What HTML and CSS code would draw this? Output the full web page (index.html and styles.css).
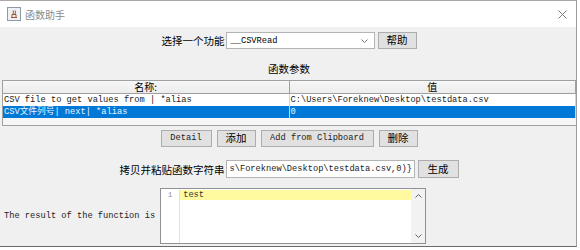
FILE: index.html
```html
<!DOCTYPE html>
<html lang="zh">
<head>
  <meta charset="UTF-8">
  <title>函数助手</title>
  <link rel="stylesheet" href="styles.css">
</head>
<body>
  <div class="window">
    <div class="titlebar">
      <svg class="app-icon" width="14" height="14" viewBox="0 0 14 14">
        <rect x="0.5" y="0.5" width="13" height="13" fill="#eef2f6" stroke="#8e9aa8"/>
        <path d="M4 10.5 h6 M5 10 v-2.5 h4 v2.5 M6 7 q1 -2 0 -3.5 M8 7 q1 -2 0 -3.5" fill="none" stroke="#a0522d" stroke-width="1"/>
      </svg>
      <span class="title">函数助手</span>
      <svg class="close" width="9" height="9" viewBox="0 0 9 9">
        <path d="M0.5 0.5 L8.5 8.5 M8.5 0.5 L0.5 8.5" stroke="#7a7a7a" stroke-width="1"/>
      </svg>
    </div>

    <div class="content">
      <div class="row selector">
        <label class="label">选择一个功能</label>
        <div class="combo">
          <span class="mono">__CSVRead</span>
          <svg class="combo-arrow" width="7" height="4" viewBox="0 0 7 4">
            <path d="M0.5 0.5 L3.5 3.5 L6.5 0.5" fill="none" stroke="#777" stroke-width="1"/>
          </svg>
        </div>
        <button class="btn btn-help">帮助</button>
      </div>

      <div class="section-title">函数参数</div>

      <div class="table-pane">
        <table class="params">
          <colgroup>
            <col class="col-name">
            <col>
          </colgroup>
          <thead>
            <tr><th>名称:</th><th>值</th></tr>
          </thead>
          <tbody>
            <tr>
              <td>CSV file to get values from | *alias</td>
              <td>C:\Users\Foreknew\Desktop\testdata.csv</td>
            </tr>
            <tr class="selected">
              <td>CSV文件列号| next| *alias</td>
              <td>0</td>
            </tr>
          </tbody>
        </table>
      </div>

      <div class="row actions">
        <button class="btn mono btn-detail">Detail</button>
        <button class="btn btn-small">添加</button>
        <button class="btn mono btn-clip">Add from Clipboard</button>
        <button class="btn btn-small">删除</button>
      </div>

      <div class="row copy">
        <label class="label">拷贝并粘贴函数字符串</label>
        <div class="field mono">s\Foreknew\Desktop\testdata.csv,0)}</div>
        <button class="btn btn-gen">生成</button>
      </div>

      <div class="result">
        <span class="mono result-label">The result of the function is</span>
        <div class="editor">
          <div class="gutter">1</div>
          <div class="lines">
            <div class="line current mono">test</div>
          </div>
          <div class="scrollbar">
            <svg width="7" height="4" viewBox="0 0 7 4">
              <path d="M0.5 3.5 L3.5 0.5 L6.5 3.5" fill="none" stroke="#666" stroke-width="1"/>
            </svg>
            <svg width="7" height="4" viewBox="0 0 7 4">
              <path d="M0.5 0.5 L3.5 3.5 L6.5 0.5" fill="none" stroke="#666" stroke-width="1"/>
            </svg>
          </div>
        </div>
      </div>
    </div>
  </div>
</body>
</html>
```

FILE: styles.css
```css
body {
  margin: 0;
  background-color: #fff;
  font-family: "Noto Sans CJK SC", sans-serif;
  font-size: 10.5px;
  color: #000;
}

.mono {
  font-family: "Liberation Mono", "Noto Sans CJK SC", monospace;
  font-size: 8.7px;
}

.window {
  width: 576px;
  height: 246px;
  border-right: 1px solid #9c9c9c;
  border-bottom: 1px solid #6a6a6a;
  display: flex;
  flex-direction: column;
}

.titlebar {
  height: 26px;
  border-top: 1px solid #a8a8a8;
  background-color: #fff;
  display: flex;
  align-items: center;
  padding: 0 9px 0 7px;
}

.title {
  margin-left: 4px;
  color: #8a8a8a;
  font-size: 10px;
}

.close {
  margin-left: auto;
}

.content {
  flex: 1;
  background-color: #f0f0f0;
  padding: 5px 0 0 2px;
  display: flex;
  flex-direction: column;
}

.row {
  display: flex;
  justify-content: center;
  align-items: center;
}

.label {
  white-space: nowrap;
}

.btn {
  box-sizing: border-box;
  height: 17px;
  padding: 0;
  background-color: #e1e1e1;
  border: 1px solid #adadad;
  border-radius: 0;
  font-family: "Noto Sans CJK SC", sans-serif;
  font-size: 10.5px;
  color: #000;
  line-height: 1;
}

.btn.mono {
  font-family: "Liberation Mono", monospace;
  font-size: 8.7px;
  color: #222;
}

/* selector row */
.selector {
  height: 17px;
}

.combo {
  box-sizing: border-box;
  width: 149px;
  height: 17px;
  margin-left: 1px;
  padding: 0 6px 0 4px;
  background-color: #fff;
  border: 1px solid #b4b4b4;
  display: flex;
  align-items: center;
  justify-content: space-between;
}

.btn-help {
  width: 39px;
  margin-left: 3px;
}

.section-title {
  margin-top: 13px;
  height: 14px;
  line-height: 14px;
  text-align: center;
}

/* parameter table */
.table-pane {
  box-sizing: border-box;
  height: 46px;
  margin-top: 4px;
  border: 1px solid #a0a0a0;
  border-right: none;
  background-color: #f6f6f6;
}

.params {
  width: 100%;
  border-collapse: collapse;
  table-layout: fixed;
}

.col-name {
  width: 286px;
}

.params th {
  height: 12px;
  padding: 0;
  font-weight: normal;
  font-size: 10px;
  line-height: 12px;
  background: linear-gradient(#f7f7f7, #ececec);
  border-bottom: 1px solid #a0a0a0;
  border-right: 1px solid #a0a0a0;
}

.params td {
  height: 12px;
  padding: 0 0 0 1px;
  font-family: "Liberation Mono", "Noto Sans CJK SC", monospace;
  font-size: 8.7px;
  line-height: 12px;
  white-space: nowrap;
  overflow: hidden;
  background-color: #fff;
  color: #222;
  border-right: 1px solid #d4d4d4;
}

.params tr.selected td {
  background-color: #0078d7;
  color: #eaf6ff;
}

/* buttons */
.actions {
  margin-top: 4px;
  height: 17px;
  gap: 5px;
}

.btn-detail {
  width: 51px;
}

.btn-small {
  width: 39px;
}

.btn-clip {
  width: 113px;
}

/* copy row */
.copy {
  margin-top: 13px;
  height: 18px;
}

.field {
  box-sizing: border-box;
  width: 189px;
  height: 18px;
  margin-left: 1px;
  padding-left: 3px;
  line-height: 16px;
  background-color: #fff;
  border: 1px solid #b4b4b4;
  white-space: nowrap;
  overflow: hidden;
  color: #222;
}

.btn-gen {
  width: 41px;
  height: 18px;
  margin-left: 3px;
}

/* result */
.result {
  margin-top: 10px;
  padding-left: 2px;
  display: flex;
  align-items: center;
  gap: 5px;
}

.result-label {
  color: #222;
}

.editor {
  box-sizing: border-box;
  width: 266px;
  height: 56px;
  background-color: #fff;
  border: 1px solid #8f9196;
  display: flex;
}

.gutter {
  width: 18px;
  border-right: 1px solid #e2e2e2;
  font-family: "Liberation Mono", monospace;
  font-size: 7px;
  color: #888;
  text-align: center;
  padding-top: 2px;
  line-height: 9px;
}

.lines {
  flex: 1;
  padding-top: 1px;
}

.line {
  height: 10px;
  line-height: 10px;
  padding-left: 3px;
  color: #333;
}

.line.current {
  background-color: #fffaa0;
}

.scrollbar {
  width: 14px;
  background-color: #f2f2f2;
  display: flex;
  flex-direction: column;
  align-items: center;
  justify-content: space-between;
  padding: 5px 0 5px;
}
```
